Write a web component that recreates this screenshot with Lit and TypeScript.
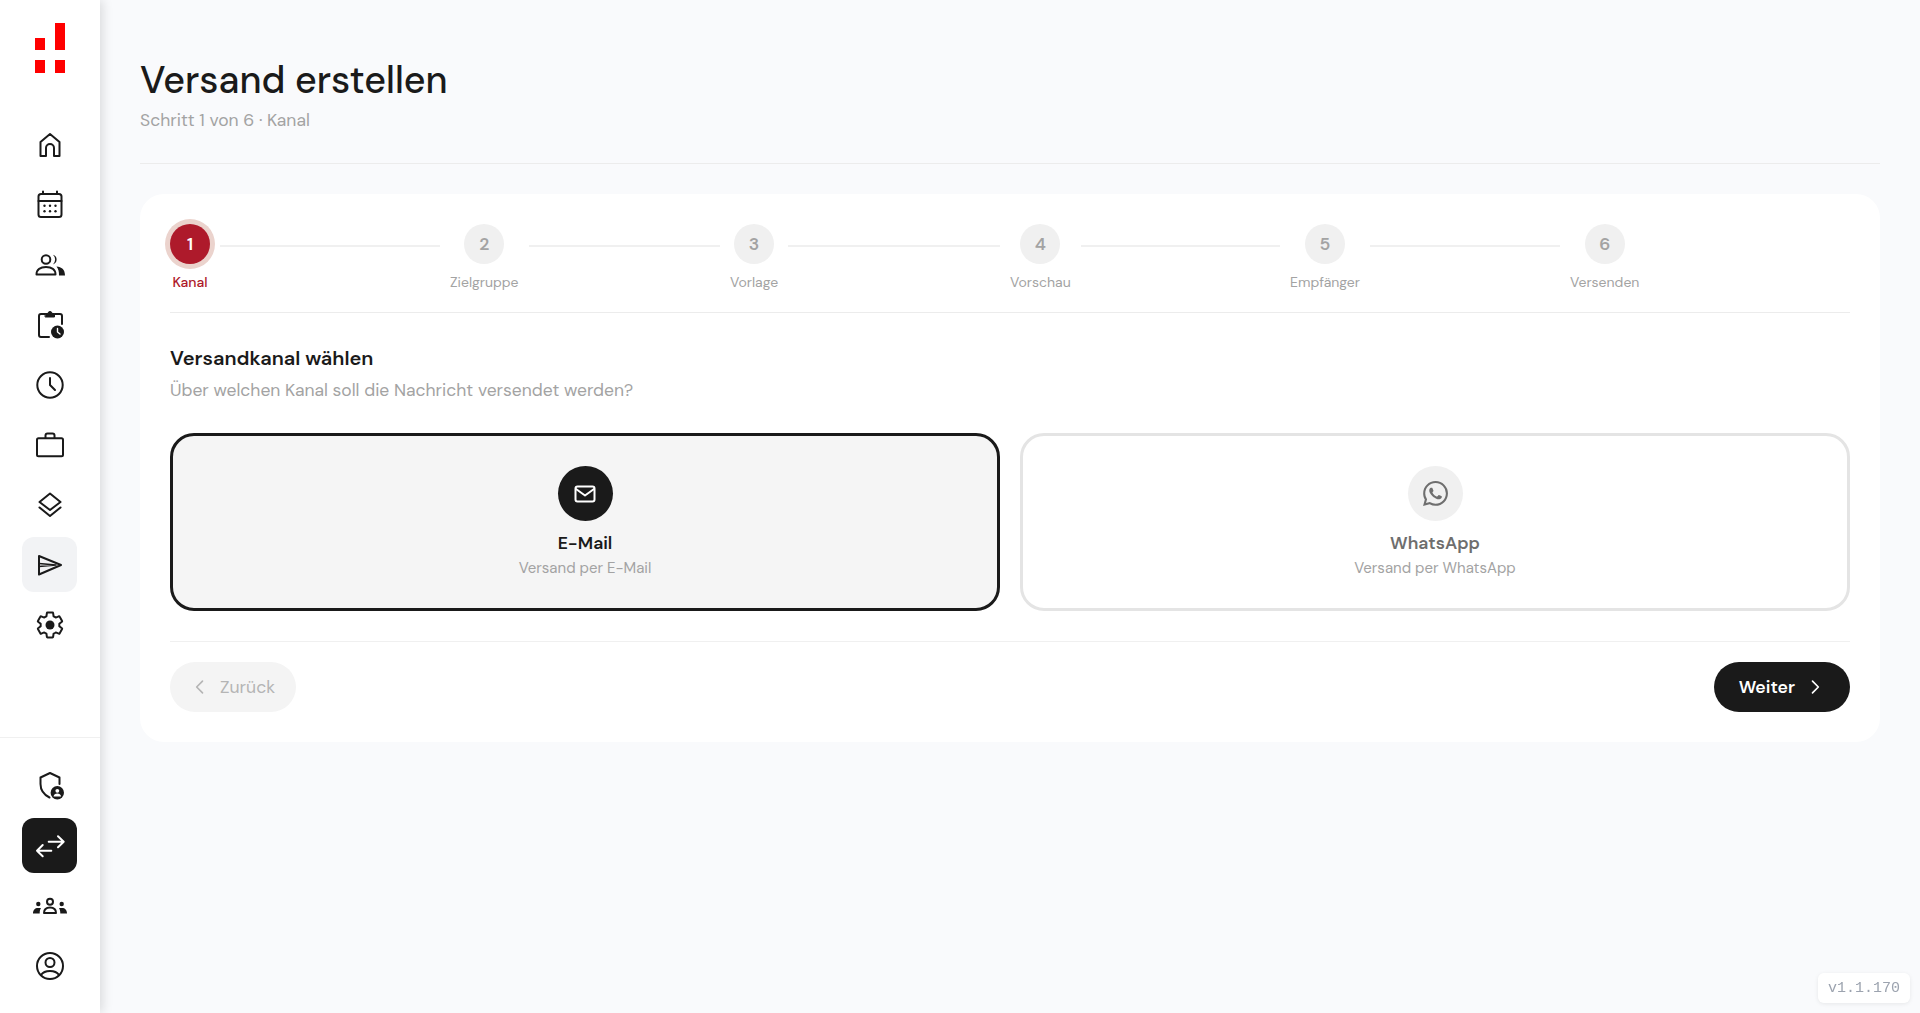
import { LitElement, html, css, svg } from 'lit'
import { customElement } from 'lit/decorators.js'

// sidebar icons are drawn on a 30px box in real pixels
const navIcon = (body: unknown) => html`<svg class="nav-icon" width="30" height="30" viewBox="0 0 30 30" fill="none" stroke="currentColor" stroke-width="2" stroke-linecap="round" stroke-linejoin="round">${body}</svg>`
const icon = (body: unknown, size = 24, sw = 2) => html`<svg width=${size} height=${size} viewBox="0 0 24 24" fill="none" stroke="currentColor" stroke-width=${sw} stroke-linecap="round" stroke-linejoin="round">${body}</svg>`

const GEAR = 'M19.43 12.98c.04-.32.07-.64.07-.98s-.03-.66-.07-.98l2.11-1.65c.19-.15.24-.42.12-.64l-2-3.46c-.12-.22-.39-.3-.61-.22l-2.49 1c-.52-.4-1.08-.73-1.69-.98l-.38-2.65C14.46 2.18 14.25 2 14 2h-4c-.25 0-.46.18-.49.42l-.38 2.65c-.61.25-1.17.59-1.69.98l-2.49-1c-.23-.09-.49 0-.61.22l-2 3.46c-.13.22-.07.49.12.64l2.11 1.65c-.04.32-.07.65-.07.98s.03.66.07.98l-2.11 1.65c-.19.15-.24.42-.12.64l2 3.46c.12.22.39.3.61.22l2.49-1c.52.4 1.08.73 1.69.98l.38 2.65c.03.24.24.42.49.42h4c.25 0 .46-.18.49-.42l.38-2.65c.61-.25 1.17-.59 1.69-.98l2.49 1c.23.09.49 0 .61-.22l2-3.46c.12-.22.07-.49-.12-.64l-2.11-1.65z'
const WHATSAPP = 'M17.472 14.382c-.297-.149-1.758-.867-2.03-.967-.273-.099-.471-.148-.67.15-.197.297-.767.966-.94 1.164-.173.199-.347.223-.644.075-.297-.15-1.255-.463-2.39-1.475-.883-.788-1.48-1.761-1.653-2.059-.173-.297-.018-.458.13-.606.134-.133.298-.347.446-.52.149-.174.198-.298.298-.497.099-.198.05-.371-.025-.52-.075-.149-.669-1.612-.916-2.207-.242-.579-.487-.5-.669-.51-.173-.008-.371-.01-.57-.01-.198 0-.52.074-.792.372-.272.297-1.04 1.016-1.04 2.479 0 1.462 1.065 2.875 1.213 3.074.149.198 2.096 3.2 5.077 4.487.709.306 1.262.489 1.694.625.712.227 1.36.195 1.871.118.571-.085 1.758-.719 2.006-1.413.248-.694.248-1.289.173-1.413-.074-.124-.272-.198-.57-.347m-5.421 7.403h-.004a9.87 9.87 0 01-5.031-1.378l-.361-.214-3.741.982.998-3.648-.235-.374a9.86 9.86 0 01-1.51-5.26c.001-5.45 4.436-9.884 9.888-9.884 2.64 0 5.122 1.03 6.988 2.898a9.825 9.825 0 012.893 6.994c-.003 5.45-4.437 9.884-9.885 9.884m8.413-18.297A11.815 11.815 0 0012.05 0C5.495 0 .16 5.335.157 11.892c0 2.096.547 4.142 1.588 5.945L.057 24l6.305-1.654a11.882 11.882 0 005.683 1.448h.005c6.554 0 11.89-5.335 11.893-11.893a11.821 11.821 0 00-3.48-8.413z'

const navTop = [
    svg`<path d="M5.500 12 15 4l9.500 8v14H19v-8a4 4 0 0 0-8 0v8H5.500z"/>`,
    svg`<rect x="3.500" y="4" width="23" height="23" rx="2.500"/><path d="M8 1.500V4M22 1.500V4M3.500 11h23"/><g fill="currentColor" stroke="none"><circle cx="9.500" cy="15.700" r="1.200"/><circle cx="15" cy="15.700" r="1.200"/><circle cx="20.500" cy="15.700" r="1.200"/><circle cx="9.500" cy="21.300" r="1.200"/><circle cx="15" cy="21.300" r="1.200"/><circle cx="20.500" cy="21.300" r="1.200"/></g>`,
    svg`<circle cx="11" cy="9.500" r="4.300"/><path d="M1.500 24.500c0-5 4-7.500 9.500-7.500s9.500 2.500 9.500 7.500z"/><path d="M18 4.800a5 5 0 0 1 0 9.600 6.500 6.500 0 0 0 0-9.600zM21.500 16.500c5 .3 8.500 3 8.500 9h-6c0-4-.5-6.500-2.500-9z" fill="currentColor" stroke="none"/>`,
    svg`<path d="M10 4H6a2 2 0 0 0-2 2v19a2 2 0 0 0 2 2h8M20 4h5a2 2 0 0 1 2 2v8"/><path d="M10.500 3.500H13a2 2 0 0 1 4 0h2.500V7h-9z" fill="currentColor" stroke-width="1"/><circle cx="22.500" cy="22" r="6.500" fill="currentColor" stroke="none"/><path d="M22.500 18.500V22l2.500 2" stroke="#fff" stroke-width="1.400"/>`,
    svg`<circle cx="15" cy="15" r="12.700"/><path d="M15 8v7l5 5"/>`,
    svg`<rect x="2" y="8.300" width="26" height="18" rx="1.500"/><path d="M10.500 8V5.500a2 2 0 0 1 2-2h5a2 2 0 0 1 2 2V8"/>`,
    svg`<path d="M15 3.500 25.500 12 15 20 4.500 12z"/><path d="M4.500 17.500 15 26l10.500-8.500"/>`,
    svg`<path d="M4 6 26 15 4 24.500z"/><path d="M4 13.500 21 15 4 16.500" stroke-width="1.500"/>`,
    svg`<g transform="scale(1.250)" stroke-width="1.600"><path d=${GEAR}/></g><circle cx="15" cy="15" r="4.500" fill="currentColor" stroke="none"/>`,
]

const navBottom = [
    svg`<g transform="translate(0 -1)"><path d="M24.500 14V7.500L15 3 5.500 7.500V14c0 6 4 11 9 13.500"/><circle cx="22.300" cy="22.700" r="6.700" fill="currentColor" stroke="none"/><circle cx="22.300" cy="20.800" r="1.900" fill="#fff" stroke="none"/><path d="M18.500 26.500c.3-2 1.800-3 3.800-3s3.500 1 3.800 3z" fill="#fff" stroke="none"/></g>`,
    svg`<path d="M13.700 10.700h15M23 5.300l5.700 5.400-5.700 5.600M16.300 19.700H2M7.700 14 2 19.700l5.700 5.600"/>`,
    svg`<circle cx="15" cy="10.700" r="3"/><path d="M9 22c0-4 2.500-5.500 6-5.500s6 1.500 6 5.500z"/><g fill="currentColor" stroke="none"><circle cx="3.300" cy="13" r="2.200"/><circle cx="26.700" cy="13" r="2.200"/><path d="M-2 22.500c0-3.500 2-5.500 5-5.500h3c-1 1.500-1.300 3-1.300 5.500zM32 22.500c0-3.500-2-5.500-5-5.500h-3c1 1.500 1.300 3 1.300 5.500z"/></g>`,
    svg`<circle cx="15" cy="15" r="13"/><circle cx="15" cy="11.500" r="4.500"/><path d="M6 24c2-3 5-4 9-4s7 1 9 4"/>`,
]

const steps = ['Kanal', 'Zielgruppe', 'Vorlage', 'Vorschau', 'Empfänger', 'Versenden']

@customElement('app-root')
export class AppRoot extends LitElement {
    static styles = css`
        :host {
            display: flex;
            min-height: 1013px;
            background: #f9fafc;
            font-family: 'DM Sans', Inter, 'Noto Sans', sans-serif;
            color: #1a1a1a;
        }
        .side {
            width: 100px;
            height: 1013px;
            flex: none;
            background: #fff;
            box-shadow: 3px 0 10px rgba(0, 0, 0, 0.12);
            display: flex;
            flex-direction: column;
            align-items: center;
        }
        .logo { margin-top: 23px; flex: none; }
        .nav { display: flex; flex-direction: column; gap: 5px; margin-top: 44px; }
        .item {
            width: 55px;
            height: 55px;
            margin-left: -1px;
            border-radius: 12px;
            display: flex;
            align-items: center;
            justify-content: center;
            color: #1a1a1a;
        }
        .nav-icon { overflow: visible; }
        .item.soft { background: #f2f3f5; }
        .item.dark { background: #1a1a1a; color: #fff; }
        .bottom {
            margin-top: auto;
            width: 100%;
            border-top: 1px solid #f0f0f0;
            padding: 20px 0;
            display: flex;
            flex-direction: column;
            align-items: center;
            gap: 5px;
        }
        main { flex: 1; padding: 54px 40px 0; min-width: 0; }
        h1 { margin: 0; font-size: 37.6px; font-weight: 500; line-height: 54px; }
        .sub { font-size: 17.5px; line-height: 24px; color: #a3a3a3; }
        .rule { border-bottom: 1px solid #ececec; margin-top: 31px; }
        .card {
            background: #fff;
            border-radius: 24px;
            margin-top: 30px;
            padding: 30px;
        }
        .stepper {
            display: flex;
            border-bottom: 1px solid #ececec;
            height: 88px;
        }
        .group { flex: 1; display: flex; align-items: flex-start; min-width: 0; }
        .step { display: flex; flex-direction: column; align-items: center; gap: 9px; font-size: 14px; line-height: 18px; color: #a3a3a3; }
        .step.on { color: #ae1a2b; font-weight: 500; }
        .num {
            width: 40px;
            height: 40px;
            border-radius: 50%;
            background: #f0f0f0;
            color: #a3a3a3;
            font-size: 17.5px;
            font-weight: 600;
            display: flex;
            align-items: center;
            justify-content: center;
        }
        .on .num { background: #ae1a2b; color: #fff; box-shadow: 0 0 0 5px #ebd3cd; }
        .line { flex: 1; height: 2px; background: #f0f0f0; margin: 21px 10px 0; }
        h2 { margin: 31px 0 0; font-size: 20px; font-weight: 600; line-height: 28px; }
        .hint { color: #a3a3a3; font-size: 17.5px; line-height: 24px; margin-top: 6px; }
        .opts { display: grid; grid-template-columns: 1fr 1fr; gap: 20px; margin-top: 31px; }
        .opt {
            height: 178px;
            box-sizing: border-box;
            border: 3px solid #e4e4e4;
            border-radius: 24px;
            display: flex;
            flex-direction: column;
            align-items: center;
            padding-top: 30px;
            color: #6e6e6e;
        }
        .opt.sel { border-color: #1a1a1a; background: #f5f5f5; color: #1a1a1a; }
        .badge {
            width: 55px;
            height: 55px;
            border-radius: 50%;
            background: #f0f0f0;
            display: flex;
            align-items: center;
            justify-content: center;
        }
        .sel .badge { background: #1a1a1a; color: #fff; }
        .wa { fill: currentColor; stroke: none; }
        .name { font-size: 17.6px; font-weight: 600; margin-top: 9px; line-height: 26px; }
        .desc { font-size: 15px; color: #a3a3a3; line-height: 20px; margin-top: 2px; }
        .foot {
            display: flex;
            justify-content: space-between;
            border-top: 1px solid #f0f0f0;
            margin-top: 30px;
            padding-top: 20px;
        }
        .btn {
            height: 50px;
            border-radius: 25px;
            display: flex;
            align-items: center;
            gap: 10px;
            font-size: 17.6px;
            padding: 0 20px;
        }
        .back { background: #f4f4f4; color: #b5b5b5; padding-right: 21px; }
        .next { background: #1a1a1a; color: #fff; font-weight: 600; padding: 0 25px; }
        .ver {
            position: fixed;
            right: 10px;
            bottom: 10px;
            height: 30px;
            box-sizing: border-box;
            background: #fff;
            border-radius: 6px;
            padding: 0 10px;
            display: flex;
            align-items: center;
            box-shadow: 0 1px 4px rgba(0, 0, 0, 0.08);
            font: 15px 'Liberation Mono', monospace;
            color: #9ca3af;
        }
    `

    render() {
        return html`
            <aside class="side">
                <svg class="logo" width="30" height="50" viewBox="0 0 30 50" fill="#ff0000">
                    <rect x="0" y="15" width="10" height="12"/><rect x="20" y="0" width="10" height="27"/>
                    <rect x="0" y="37" width="10" height="13"/><rect x="20" y="37" width="10" height="13"/>
                </svg>
                <div class="nav">
                    ${navTop.map((b, i) => html`<div class="item ${i === 7 ? 'soft' : ''}">${navIcon(b)}</div>`)}
                </div>
                <div class="bottom">
                    ${navBottom.map((b, i) => html`<div class="item ${i === 1 ? 'dark' : ''}">${navIcon(b)}</div>`)}
                </div>
            </aside>
            <main>
                <h1>Versand erstellen</h1>
                <div class="sub">Schritt 1 von 6 · Kanal</div>
                <div class="rule"></div>
                <section class="card">
                    <div class="stepper">
                        ${steps.map((s, i) => html`
                            <div class="group">
                                <div class="step ${i === 0 ? 'on' : ''}"><div class="num">${i + 1}</div>${s}</div>
                                ${i < 5 ? html`<div class="line"></div>` : ''}
                            </div>
                        `)}
                    </div>
                    <h2>Versandkanal wählen</h2>
                    <div class="hint">Über welchen Kanal soll die Nachricht versendet werden?</div>
                    <div class="opts">
                        <div class="opt sel">
                            <div class="badge">${icon(svg`<rect x="2.500" y="4.500" width="19" height="15" rx="2"/><path d="m3 7 9 6.500L21 7"/>`, 24)}</div>
                            <div class="name">E-Mail</div>
                            <div class="desc">Versand per E-Mail</div>
                        </div>
                        <div class="opt">
                            <div class="badge">${icon(svg`<path class="wa" d=${WHATSAPP}/>`, 25)}</div>
                            <div class="name">WhatsApp</div>
                            <div class="desc">Versand per WhatsApp</div>
                        </div>
                    </div>
                    <div class="foot">
                        <div class="btn back">${icon(svg`<path d="m15 5-7 7 7 7"/>`, 20)} Zurück</div>
                        <div class="btn next">Weiter ${icon(svg`<path d="m9 5 7 7-7 7"/>`, 20)}</div>
                    </div>
                </section>
            </main>
            <div class="ver">v1.1.170</div>
        `
    }
}
